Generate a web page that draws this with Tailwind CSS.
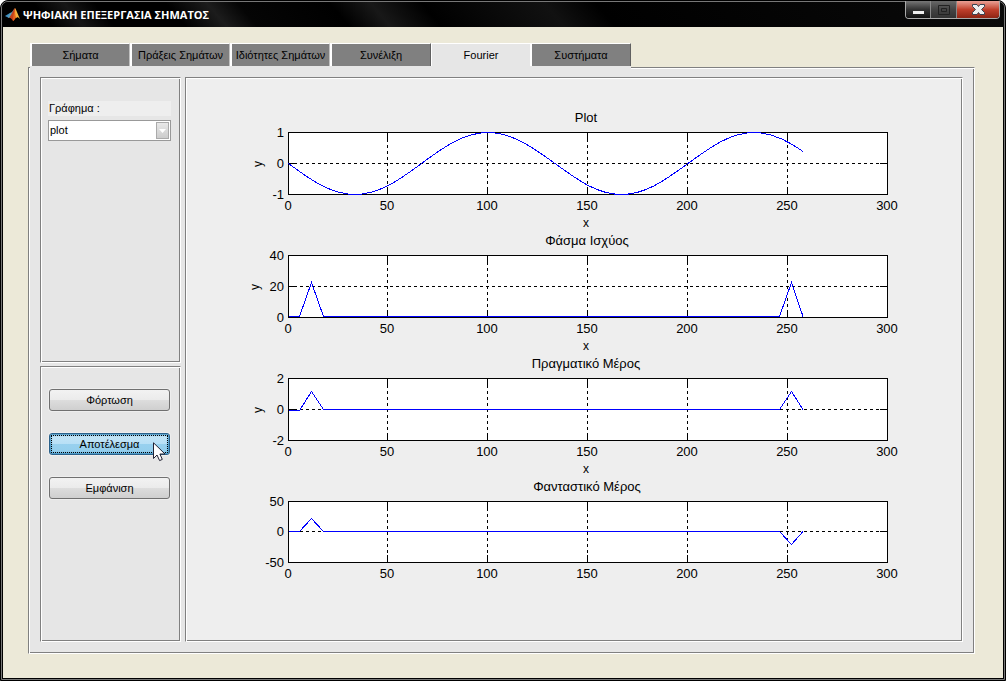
<!DOCTYPE html>
<html lang="el">
<head>
<meta charset="utf-8">
<title>ΨΗΦΙΑΚΗ ΕΠΕΞΕΡΓΑΣΙΑ ΣΗΜΑΤΟΣ</title>
<script src="https://cdn.jsdelivr.net/npm/@tailwindcss/browser@4"></script>
</head>
<body class="bg-white font-['Liberation_Sans',Arial,sans-serif] text-[11px] text-black">
<div class="flex min-h-screen flex-col rounded-t-lg border border-black bg-black">
<div class="flex flex-1 flex-col rounded-t-[7px] border border-[#777]">

  <header class="flex h-[25px] items-start justify-between rounded-t-md bg-[linear-gradient(50deg,#000_0%,#000_5%,#161616_8%,#000_11%,#000_18%,#1c1c1c_22%,#050505_25%,#000_34%,#181818_38%,#000_43%,#111_55%,#000_60%,#0a0a0a_100%)] pl-[3px] pr-[3px]">
    <div class="flex items-center gap-[2px] pt-[5px]">
      <svg class="size-4" viewBox="0 0 16 16" aria-hidden="true">
        <path d="M0 9 L5 6 L7 8 L4 11 Z" fill="#3f8fc4"/>
        <path d="M5 6 L7 5 L10 1 L8 7 L4 11 L3 10 Z" fill="#5aa0b8"/>
        <path d="M10 1 C8 3 7 7 4 11 C6 10 7 13 8 14 C10 13 10 10 11 9 Z" fill="#c2401c"/>
        <path d="M10 1 C9 5 8 9 8 14 C10 13 10 11 12 10 Z" fill="#e8641b"/>
        <path d="M10 1 C12 4 13 8 15 12 C13 10 12 10 11 11 C10 7 10 4 10 1 Z" fill="#f6b13c"/>
      </svg>
      <h1 class="whitespace-nowrap font-['Open_Sans',sans-serif] text-[11px] leading-[16px] font-bold text-white">ΨΗΦΙΑΚΗ ΕΠΕΞΕΡΓΑΣΙΑ ΣΗΜΑΤΟΣ</h1>
    </div>
    <div class="-mt-px mr-px flex h-[18px] w-[95px] rounded-b-[4px] border border-t-0 border-[#aaa]">
      <button aria-label="Ελαχιστοποίηση" class="flex w-[25px] items-end justify-center rounded-bl-[3px] border-r border-[#888] bg-linear-to-b from-[#777] via-[#333] via-50% to-[#111] pb-[4px]"><span class="h-[3px] w-[11px] bg-[#eee]"></span></button>
      <button aria-label="Μεγιστοποίηση" class="flex w-[26px] items-center justify-center border-r border-[#888] bg-linear-to-b from-[#686868] via-[#444] via-50% to-[#333]">
        <svg class="h-[10px] w-3" viewBox="0 0 12 10" fill="none" stroke="#222"><path d="M.5 .5h11v9H.5zM3.500 3.500h5v3h-5z"/></svg></button>
      <button aria-label="Κλείσιμο" class="flex flex-1 items-center justify-center rounded-br-[3px] bg-linear-to-b from-[#e9a095] via-[#c0402c] via-50% to-[#8e2413]">
        <svg class="h-[11px] w-[13px]" viewBox="0 0 13 11"><path d="M.5 .5h4.500l1.500 2 1.500-2h4.500v2L9.500 5.500l3 3v2H8l-1.500-2-1.500 2H.5v-2l3-3-3-3z" fill="#eee" stroke="#3a4250"/></svg></button>
    </div>
  </header>

  <main class="mx-px mb-px flex flex-1 flex-col bg-[#ece9d8] pt-4 pr-7 pb-6 pl-[25px]">
    <nav class="relative z-10 -mb-[2px] ml-[2px] flex h-[26px] self-start border-b-[3px] border-[#e6e6e6] text-[11px]" role="tablist">
      <button role="tab" class="w-[100px] border-t border-r border-l-2 border-t-white border-r-[#c0c0c0] border-l-white bg-[#808080]">Σήματα</button>
      <button role="tab" class="w-[100px] border-t border-r border-l-2 border-t-white border-r-[#c0c0c0] border-l-white bg-[#808080] whitespace-nowrap">Πράξεις Σημάτων</button>
      <button role="tab" class="w-[100px] border-t border-r border-l-2 border-t-white border-r-[#c0c0c0] border-l-white bg-[#808080] whitespace-nowrap">Ιδιότητες Σημάτων</button>
      <button role="tab" class="w-[101px] border-t border-r border-l-2 border-t-white border-r-[#606060] border-l-white bg-[#808080]">Συνέλιξη</button>
      <button role="tab" aria-selected="true" class="w-[99px] border-t border-l border-white bg-[#e6e6e6]">Fourier</button>
      <button role="tab" class="w-[101px] border-t border-r border-l-2 border-t-white border-r-[#606060] border-l-white bg-[#808080]">Συστήματα</button>
    </nav>

    <section class="flex flex-1 gap-1 border border-t-[#808080] border-r-white border-b-white border-l-[#808080] bg-[#e6e6e6] pt-[9px] pr-[11px] pb-[11px] pl-[11px] shadow-[inset_1px_1px_0_#fff,inset_-1px_-1px_0_#808080]">
      <aside class="flex w-[141px] shrink-0 flex-col gap-[3px]">
        <div class="h-[286px] border border-t-[#808080] border-r-white border-b-white border-l-[#808080] pr-[9px] pl-[7px] pt-[23px] shadow-[inset_1px_1px_0_#fff,inset_-1px_-1px_0_#808080]">
          <label for="graph" class="block bg-[#eee] pl-px leading-[15px]">Γράφημα :</label>
          <div class="relative mt-1">
            <select id="graph" class="block h-[21px] w-full appearance-none border border-[#999] bg-white px-px text-[11px]"><option>plot</option></select>
            <span class="pointer-events-none absolute top-[2px] right-[2px] flex h-[17px] w-[13px] items-center justify-center border border-[#aaa] bg-linear-to-b from-[#e8e8e8] to-[#ccc]">
              <svg class="h-1 w-[7px]" viewBox="0 0 7 4"><path d="M0 0h7L3.500 4z" fill="#fff"/></svg>
            </span>
          </div>
        </div>
        <div class="flex flex-1 flex-col gap-[22px] border border-t-[#808080] border-r-white border-b-white border-l-[#808080] pt-[22px] pr-[10px] pl-2 shadow-[inset_1px_1px_0_#fff,inset_-1px_-1px_0_#808080]">
          <button class="h-[22px] rounded-[3px] border border-[#707070] bg-[linear-gradient(#f2f2f2_0%,#ebebeb_49%,#dddddd_51%,#cfcfcf_100%)] shadow-[0_0_0_1px_#eee]">Φόρτωση</button>
          <div class="relative">
            <button class="block h-[22px] w-full rounded-[3px] border border-[#2c628b] bg-[linear-gradient(#c5e6f7_0%,#b8e0f6_48%,#98d1ef_50%,#92cdec_100%)] p-px shadow-[0_0_0_1px_#eee,inset_0_0_2px_1px_#3c8fc0]"><span class="block border border-dotted border-black leading-[16px]">Αποτέλεσμα</span></button>
            <svg class="pointer-events-none absolute top-[9px] left-[104px] h-5 w-[13px]" viewBox="0 0 13 20"><path d="M.5 .8V16.500L4 13l2.600 5.600 2.700-1.200L6.900 12H12z" fill="#fff" stroke="#223"/></svg>
          </div>
          <button class="h-[22px] rounded-[3px] border border-[#707070] bg-[linear-gradient(#f2f2f2_0%,#ebebeb_49%,#dddddd_51%,#cfcfcf_100%)] shadow-[0_0_0_1px_#eee]">Εμφάνιση</button>
        </div>
      </aside>

      <div class="flex min-w-0 flex-1 flex-col border border-t-[#808080] border-r-white border-b-white border-l-[#808080] bg-[#eee] pt-[31px] shadow-[inset_1px_1px_0_#fff,inset_-1px_-1px_0_#808080]">
        <svg class="hidden">
          <defs>
            <g id="grid">
              <path d="M288.500 23.500h599v62h-599z" fill="#fff" stroke="#000"/>
              <path d="M288 54.500h600M387.500 24v61M487.500 24v61M587.500 24v61M687.500 24v61M787.500 24v61" stroke="#000" stroke-dasharray="3 3" fill="none"/>
              <path d="M288 54.500h8M880 54.500h8M387.500 24v8m0 46v8M487.500 24v8m0 46v8M587.500 24v8m0 46v8M687.500 24v8m0 46v8M787.500 24v8m0 46v8" stroke="#000" fill="none"/>
            </g>
            <g id="gridShort">
              <path d="M288.500 23.500h599v61h-599z" fill="#fff" stroke="#000"/>
              <path d="M288 53.500h600M387.500 24v60M487.500 24v60M587.500 24v60M687.500 24v60M787.500 24v60" stroke="#000" stroke-dasharray="3 3" fill="none"/>
              <path d="M288 53.500h8M880 53.500h8M387.500 24v8m0 45v8M487.500 24v8m0 45v8M587.500 24v8m0 45v8M687.500 24v8m0 45v8M787.500 24v8m0 45v8" stroke="#000" fill="none"/>
            </g>
            <g id="xticks" text-anchor="middle">
              <text x="288" y="101">0</text><text x="387" y="101">50</text><text x="487" y="101">100</text><text x="587" y="101">150</text><text x="687" y="101">200</text><text x="787" y="101">250</text><text x="887" y="101">300</text>
            </g>
          </defs>
        </svg>

        <svg class="block w-full text-[13px]" viewBox="186 0 776 123" role="img" aria-label="Plot">
          <g shape-rendering="crispEdges"><use href="#grid"/>
          <path d="M288.500 54.500C310 70.500 331 85.500 355 85.500S400 70.500 421.500 54.500S464 23.500 488 23.500S533 38.500 555 54.500S597 85.500 621.500 85.500S666 70.500 688 54.500S730 23.500 754 23.500C771 23.500 787 31 803 42.500" fill="none" stroke="#00f"/></g>
          <use href="#xticks"/>
          <g text-anchor="end"><text x="284" y="28">1</text><text x="284" y="59">0</text><text x="284" y="90">-1</text></g>
          <g text-anchor="middle"><text x="586" y="13">Plot</text><text x="586" y="118" font-size="12">x</text><text transform="translate(262 55) rotate(-90)" font-size="12">y</text></g>
        </svg>

        <svg class="block w-full text-[13px]" viewBox="186 0 776 123" role="img" aria-label="Φάσμα Ισχύος">
          <g shape-rendering="crispEdges"><use href="#grid"/>
          <path d="M289 84.500H299.500L311.500 50.500L323.500 84.500H779.500L791.500 50.500L803 84.500" fill="none" stroke="#00f"/></g>
          <use href="#xticks"/>
          <g text-anchor="end"><text x="284" y="28">40</text><text x="284" y="59">20</text><text x="284" y="90">0</text></g>
          <g text-anchor="middle"><text x="587" y="13">Φάσμα Ισχύος</text><text x="586" y="118" font-size="12">x</text><text transform="translate(259 55) rotate(-90)" font-size="12">y</text></g>
        </svg>

        <svg class="block w-full text-[13px]" viewBox="186 0 776 123" role="img" aria-label="Πραγματικό Μέρος">
          <g shape-rendering="crispEdges"><use href="#grid"/>
          <path d="M289 55.500H299.500L311.500 36.500L323.500 54.500H779.500L791.500 36.500L803 54.500" fill="none" stroke="#00f"/></g>
          <use href="#xticks"/>
          <g text-anchor="end"><text x="284" y="28">2</text><text x="284" y="59">0</text><text x="284" y="90">-2</text></g>
          <g text-anchor="middle"><text x="586" y="13">Πραγματικό Μέρος</text><text x="586" y="118" font-size="12">x</text><text transform="translate(262 55) rotate(-90)" font-size="12">y</text></g>
        </svg>

        <svg class="block w-full text-[13px]" viewBox="186 0 776 123" role="img" aria-label="Φανταστικό Μέρος">
          <g shape-rendering="crispEdges"><use href="#gridShort"/>
          <path d="M289 53.500H299.500L311.500 40.500L323.500 53.500H779.500L791.500 66.500L803 53.500" fill="none" stroke="#00f"/></g>
          <use href="#xticks" y="-1"/>
          <g text-anchor="end"><text x="284" y="28">50</text><text x="284" y="58">0</text><text x="284" y="89">-50</text></g>
          <text x="587" y="13" text-anchor="middle">Φανταστικό Μέρος</text>
        </svg>
      </div>
    </section>
  </main>
</div>
</div>
</body>
</html>
